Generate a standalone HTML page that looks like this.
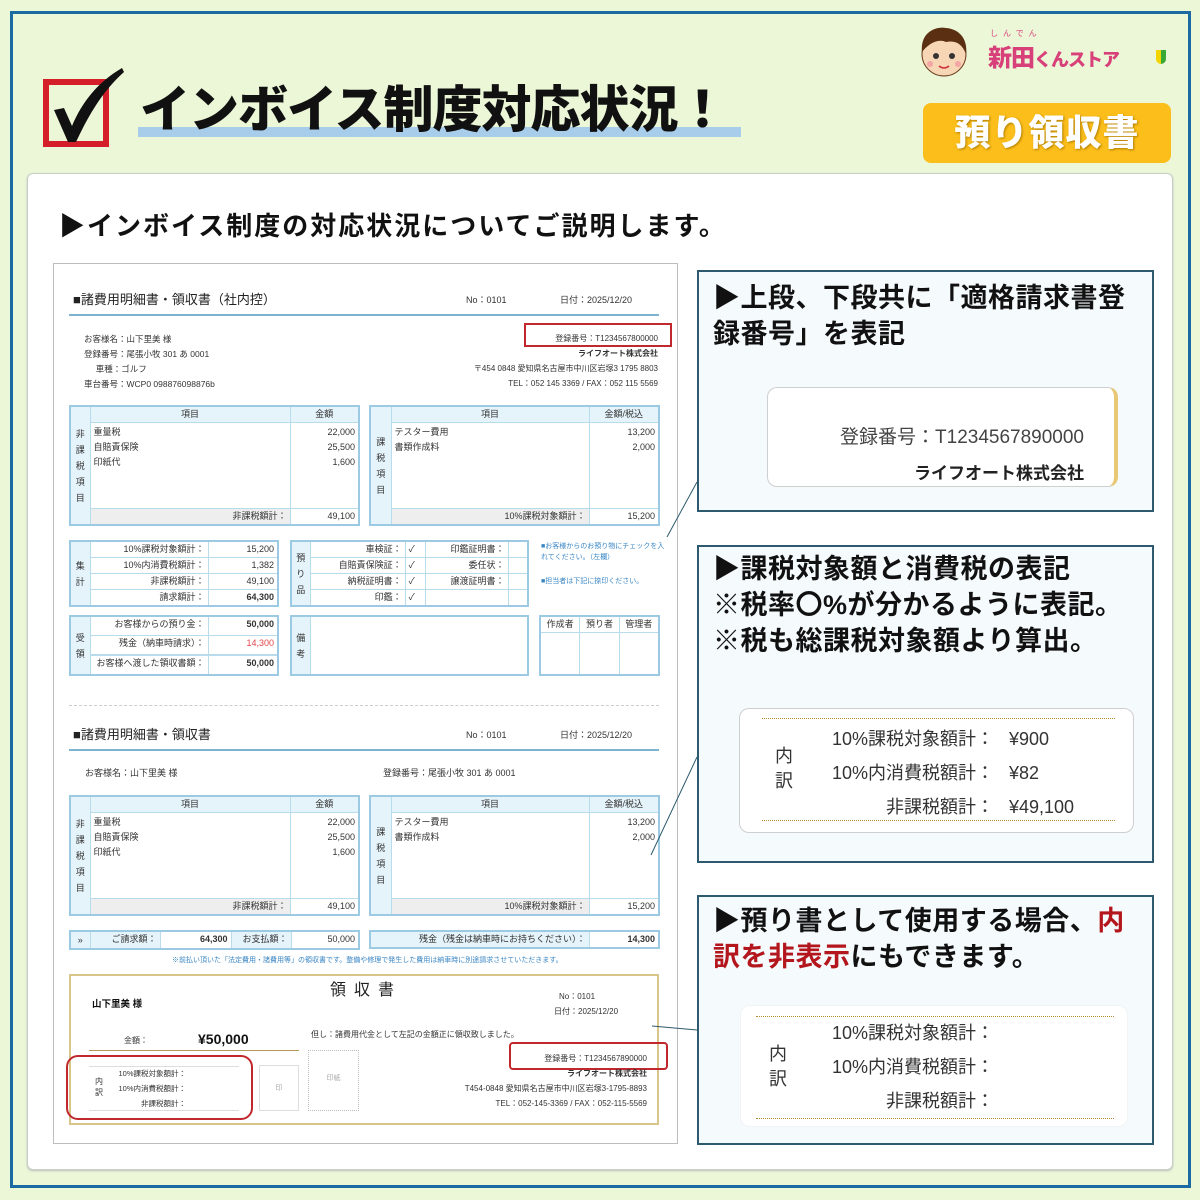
<!DOCTYPE html>
<html><head><meta charset="utf-8">
<style>
*{margin:0;padding:0;box-sizing:border-box}
body{width:1200px;height:1200px;background:#ecf7d8;position:relative;overflow:hidden;font-family:"Liberation Sans","Noto Sans CJK JP",sans-serif;color:#222}
.a{position:absolute}
.frame{left:10px;top:11px;width:1181px;height:1177px;border:3px solid #1b6aa2}
.card{left:27px;top:173px;width:1146px;height:997px;background:#fff;border:1px solid #c9cfc4;border-radius:6px;box-shadow:0 1px 2px #bbb}
.doc{left:53px;top:263px;width:625px;height:881px;border:1px solid #bdbdbd;background:#fff;font-size:9px;color:#333}
.d{position:absolute;font-size:9px;line-height:12px;white-space:nowrap;color:#333}
table.t{position:absolute;border-collapse:collapse;border:2px solid #9ccae2;font-size:9px;color:#333}
table.t td{border:1px solid #b9dcec;padding:0 3px;vertical-align:top;line-height:15px}
td.lb{background:#e5f3fa;text-align:center;vertical-align:middle!important;line-height:16px!important;padding:0!important}
td.h{background:#e5f3fa;text-align:center;height:16px}
td.ft{background:#eee;text-align:right}
.r{text-align:right}
.b{font-weight:bold}
.panel{left:697px;width:457px;background:#f5fafc;border:2px solid #2d5a6e}
.pt{position:absolute;left:14px;font-size:27px;font-weight:bold;line-height:36px;color:#111;white-space:nowrap;letter-spacing:0.5px}
.ib{position:absolute;background:#fff;border:1px solid #cfcfcf;border-radius:10px}
.dot{position:absolute;border-top:1px dotted #b58a2a}
.s{position:absolute;font-size:18px;color:#333;white-space:nowrap}
</style></head><body>
<div class="a frame"></div>

<svg class="a" style="left:38px;top:64px" width="90" height="90" viewBox="0 0 90 90">
<rect x="8" y="18" width="60" height="62" fill="none" stroke="#d41f2a" stroke-width="6"/>
<path d="M16 46 L26 44 L34 62 C44 38 60 18 84 4 L86 8 C66 26 52 48 38 78 L30 78 Z" fill="#111"/>
</svg>
<div class="a" style="left:138px;top:127px;width:603px;height:10px;background:#a8cdea"></div>
<div class="a" style="left:140px;top:80px;font-size:50px;font-weight:900;line-height:60px;color:#111;letter-spacing:-1px;white-space:nowrap">インボイス制度対応状況！</div>

<svg class="a" style="left:916px;top:24px" width="56" height="54" viewBox="0 0 56 54">
<ellipse cx="28" cy="30" rx="22" ry="22" fill="#f7d6b5" stroke="#6b3b1a" stroke-width="1"/>
<path d="M6 28 C4 8 20 2 30 4 C44 5 52 16 50 30 C46 20 40 16 30 18 C22 14 12 20 6 28Z" fill="#5a2f12"/>
<circle cx="20" cy="32" r="3" fill="#333"/><circle cx="36" cy="32" r="3" fill="#333"/>
<circle cx="14" cy="40" r="3" fill="#f4a6a6"/><circle cx="42" cy="40" r="3" fill="#f4a6a6"/>
<path d="M23 42 Q28 46 33 42" stroke="#c33" stroke-width="1.5" fill="none"/>
</svg>
<div class="a" style="left:990px;top:28px;font-size:8px;color:#d8407a;letter-spacing:5px">しんでん</div>
<div class="a" style="left:988px;top:38px;font-size:24px;font-weight:900;color:#d8407a;white-space:nowrap;letter-spacing:-1px">新田<span style="font-size:18px">くんストア</span></div>
<div class="a" style="left:1156px;top:50px;width:10px;height:14px;background:linear-gradient(90deg,#f2d400 50%,#39a935 50%);border-radius:0 0 6px 6px"></div>

<div class="a" style="left:923px;top:103px;width:248px;height:60px;background:#fbbe1b;border-radius:8px;color:#fff;font-size:36px;font-weight:900;text-align:center;line-height:60px;text-shadow:1px 1px 2px #b07d00;letter-spacing:1px">預り領収書</div>

<div class="a card"></div>
<div class="a" style="left:59px;top:208px;font-size:26px;font-weight:bold;line-height:36px;color:#111;white-space:nowrap;letter-spacing:2px">▶インボイス制度の対応状況についてご説明します。</div>

<div class="a doc"></div>
<div class="d" style="left:73px;top:292px;font-size:13px;line-height:16px;color:#222">■諸費用明細書・領収書（社内控）</div>
<div class="d" style="left:466px;top:294px">No：0101</div>
<div class="d" style="left:560px;top:294px">日付：2025/12/20</div>
<div class="a" style="left:69px;top:314px;width:590px;height:2px;background:#7db3d0"></div>
<div class="a" style="left:524px;top:323px;width:148px;height:24px;border:2px solid #c0282d"></div>
<div class="d" style="left:84px;top:332px;font-size:8.5px;line-height:15px">お客様名：山下里美 様<br>登録番号：尾張小牧 301 あ 0001<br>&nbsp;&nbsp;&nbsp;&nbsp;&nbsp;車種：ゴルフ<br>車台番号：WCP0 098876098876b</div>
<div class="d r" style="right:542px;top:331px;font-size:8px;line-height:15px">登録番号：T1234567800000<br><b>ライフオート株式会社</b><br>〒454 0848 愛知県名古屋市中川区岩塚3 1795 8803<br>TEL：052 145 3369 / FAX：052 115 5569</div>

<table class="t" style="left:69px;top:405px;width:291px;height:121px">
<tr style="height:16px"><td rowspan="3" class="lb" style="width:20px">非<br>課<br>税<br>項<br>目</td><td class="h">項目</td><td class="h" style="width:69px">金額</td></tr>
<tr><td style="padding-top:2px">重量税<br>自賠責保険<br>印紙代</td><td class="r" style="padding-top:2px">22,000<br>25,500<br>1,600</td></tr>
<tr style="height:16px"><td class="ft">非課税額計：</td><td class="r">49,100</td></tr>
</table>
<table class="t" style="left:369px;top:405px;width:291px;height:121px">
<tr style="height:16px"><td rowspan="3" class="lb" style="width:21px">課<br>税<br>項<br>目</td><td class="h">項目</td><td class="h" style="width:70px">金額/税込</td></tr>
<tr><td style="padding-top:2px">テスター費用<br>書類作成料</td><td class="r" style="padding-top:2px">13,200<br>2,000</td></tr>
<tr style="height:16px"><td class="ft">10%課税対象額計：</td><td class="r">15,200</td></tr>
</table>

<table class="t" style="left:69px;top:540px;width:210px;height:61px">
<tr><td rowspan="4" class="lb" style="width:20px">集<br>計</td><td class="r">10%課税対象額計：</td><td class="r" style="width:70px">15,200</td></tr>
<tr><td class="r">10%内消費税額計：</td><td class="r">1,382</td></tr>
<tr><td class="r">非課税額計：</td><td class="r">49,100</td></tr>
<tr><td class="r">請求額計：</td><td class="r b">64,300</td></tr>
</table>
<table class="t" style="left:290px;top:540px;width:239px;height:61px">
<tr><td rowspan="4" class="lb" style="width:19px">預<br>り<br>品</td><td class="r">車検証：</td><td style="width:20px">✓</td><td class="r">印鑑証明書：</td><td style="width:20px"></td></tr>
<tr><td class="r">自賠責保険証：</td><td>✓</td><td class="r">委任状：</td><td></td></tr>
<tr><td class="r">納税証明書：</td><td>✓</td><td class="r">譲渡証明書：</td><td></td></tr>
<tr><td class="r">印鑑：</td><td>✓</td><td></td><td></td></tr>
</table>
<div class="d" style="left:541px;top:541px;font-size:7px;color:#3a86c4;line-height:11px">■お客様からのお預り物にチェックを入<br>れてください。（左欄）</div>
<div class="d" style="left:541px;top:576px;font-size:7px;color:#3a86c4">■担当者は下記に捺印ください。</div>

<table class="t" style="left:69px;top:615px;width:210px;height:61px">
<tr><td rowspan="4" class="lb" style="width:20px">受<br>領</td><td class="r">お客様からの預り金：</td><td class="r b" style="width:70px">50,000</td></tr>
<tr><td class="r">残金（納車時請求）：</td><td class="r" style="color:#e0464b">14,300</td></tr>
<tr><td></td><td></td></tr>
<tr><td class="r">お客様へ渡した領収書額：</td><td class="r b">50,000</td></tr>
</table>
<table class="t" style="left:290px;top:615px;width:239px;height:61px">
<tr><td class="lb" style="width:19px">備<br>考</td><td></td></tr>
</table>
<table class="t" style="left:539px;top:615px;width:121px;height:61px">
<tr style="height:15px"><td style="text-align:center">作成者</td><td style="text-align:center">預り者</td><td style="text-align:center">管理者</td></tr>
<tr><td></td><td></td><td></td></tr>
</table>

<div class="a" style="left:69px;top:705px;width:590px;border-top:1px dashed #ccc"></div>
<div class="d" style="left:73px;top:727px;font-size:13px;line-height:16px;color:#222">■諸費用明細書・領収書</div>
<div class="d" style="left:466px;top:729px">No：0101</div>
<div class="d" style="left:560px;top:729px">日付：2025/12/20</div>
<div class="a" style="left:69px;top:749px;width:590px;height:2px;background:#7db3d0"></div>
<div class="d" style="left:85px;top:767px">お客様名：山下里美 様</div>
<div class="d" style="left:383px;top:767px">登録番号：尾張小牧 301 あ 0001</div>

<table class="t" style="left:69px;top:795px;width:291px;height:121px">
<tr style="height:16px"><td rowspan="3" class="lb" style="width:20px">非<br>課<br>税<br>項<br>目</td><td class="h">項目</td><td class="h" style="width:69px">金額</td></tr>
<tr><td style="padding-top:2px">重量税<br>自賠責保険<br>印紙代</td><td class="r" style="padding-top:2px">22,000<br>25,500<br>1,600</td></tr>
<tr style="height:16px"><td class="ft">非課税額計：</td><td class="r">49,100</td></tr>
</table>
<table class="t" style="left:369px;top:795px;width:291px;height:121px">
<tr style="height:16px"><td rowspan="3" class="lb" style="width:21px">課<br>税<br>項<br>目</td><td class="h">項目</td><td class="h" style="width:70px">金額/税込</td></tr>
<tr><td style="padding-top:2px">テスター費用<br>書類作成料</td><td class="r" style="padding-top:2px">13,200<br>2,000</td></tr>
<tr style="height:16px"><td class="ft">10%課税対象額計：</td><td class="r">15,200</td></tr>
</table>
<table class="t" style="left:69px;top:930px;width:291px;height:17px">
<tr><td class="lb" style="width:20px">»</td><td class="r" style="width:70px;background:#e5f3fa">ご請求額：</td><td class="r b" style="width:71px">64,300</td><td class="r" style="width:60px;background:#e5f3fa">お支払額：</td><td class="r">50,000</td></tr>
</table>
<table class="t" style="left:369px;top:930px;width:291px;height:17px">
<tr><td class="r" style="background:#e5f3fa">残金（残金は納車時にお持ちください）：</td><td class="r b" style="width:70px">14,300</td></tr>
</table>
<div class="d" style="left:172px;top:955px;font-size:7px;color:#3a86c4">※前払い頂いた「法定費用・諸費用等」の領収書です。整備や修理で発生した費用は納車時に別途請求させていただきます。</div>

<div class="a" style="left:69px;top:974px;width:590px;height:151px;border:2px solid #d9c58a"></div>
<div class="d" style="left:330px;top:982px;font-size:16px;line-height:18px;letter-spacing:8px;color:#222">領収書</div>
<div class="d b" style="left:92px;top:999px;font-size:9.5px;color:#111">山下里美 様</div>
<div class="d" style="left:559px;top:991px;font-size:8px">No：0101</div>
<div class="d" style="left:554px;top:1006px;font-size:8px">日付：2025/12/20</div>
<div class="d" style="left:124px;top:1035px;font-size:8px">金額：</div>
<div class="d b" style="left:198px;top:1031px;font-size:14px;line-height:16px;color:#111">¥50,000</div>
<div class="a" style="left:89px;top:1050px;width:210px;border-top:1px solid #b59a55"></div>
<div class="d" style="left:311px;top:1029px;font-size:8px">但し：諸費用代金として左記の金額正に領収致しました。</div>
<div class="a" style="left:509px;top:1042px;width:159px;height:28px;border:2px solid #c0282d;border-radius:4px"></div>
<div class="d r" style="right:553px;top:1051px;font-size:8px;line-height:15px">登録番号：T1234567890000<br><b>ライフオート株式会社</b><br>T454-0848 愛知県名古屋市中川区岩塚3-1795-8893<br>TEL：052-145-3369 / FAX：052-115-5569</div>
<div class="a" style="left:89px;top:1066px;width:150px;border-top:1px solid #ddd"></div>
<div class="a" style="left:89px;top:1110px;width:150px;border-top:1px solid #ddd"></div>
<div class="d" style="left:95px;top:1076px;font-size:8px;line-height:11px">内<br>訳</div>
<div class="d r" style="right:1014px;top:1066px;font-size:7.5px;line-height:15px">10%課税対象額計：<br>10%内消費税額計：<br>非課税額計：</div>
<div class="a" style="left:259px;top:1065px;width:40px;height:46px;border:1px solid #ddd;font-size:7px;color:#aaa;text-align:center;line-height:46px">印</div>
<div class="a" style="left:308px;top:1050px;width:51px;height:61px;border:1px dotted #bbb;font-size:7px;color:#aaa;text-align:center;line-height:56px">印紙</div>
<div class="a" style="left:66px;top:1055px;width:187px;height:65px;border:2px solid #c0282d;border-radius:12px"></div>

<svg class="a" style="left:0;top:0" width="1200" height="1200">
<path d="M697 482 L667 537" stroke="#2d5a6e" stroke-width="1" fill="none"/>
<path d="M697 757 L651 855" stroke="#2d5a6e" stroke-width="1" fill="none"/>
<path d="M652 1026 L697 1030" stroke="#2d5a6e" stroke-width="1" fill="none"/>
</svg>

<div class="a panel" style="top:270px;height:242px">
<div class="pt" style="top:8px">▶上段、下段共に「適格請求書登<br>録番号」を表記</div>
<div class="ib" style="left:68px;top:115px;width:351px;height:100px;border-right:4px solid #e8c874">
<div class="a" style="right:30px;top:34px;font-size:19px;color:#444;white-space:nowrap">登録番号：T1234567890000</div>
<div class="a" style="right:30px;top:71px;font-size:17px;font-weight:bold;color:#222;white-space:nowrap">ライフオート株式会社</div>
</div>
</div>

<div class="a panel" style="top:545px;height:318px">
<div class="pt" style="top:4px">▶課税対象額と消費税の表記<br>※税率〇%が分かるように表記。<br>※税も総課税対象額より算出。</div>
<div class="ib" style="left:40px;top:161px;width:395px;height:125px"></div>
</div>
<div class="dot" style="left:762px;top:718px;width:353px"></div>
<div class="dot" style="left:762px;top:820px;width:353px"></div>
<div class="s" style="left:775px;top:744px;line-height:25px">内<br>訳</div>
<div class="s r" style="right:206px;top:722px;line-height:34px">10%課税対象額計：<br>10%内消費税額計：<br>非課税額計：</div>
<div class="s" style="left:1009px;top:722px;line-height:34px">¥900<br>¥82<br>¥49,100</div>

<div class="a panel" style="top:895px;height:250px">
<div class="pt" style="top:6px">▶預り書として使用する場合、<span style="color:#b3161c">内</span><br><span style="color:#b3161c">訳を非表示</span>にもできます。</div>
<div class="ib" style="left:41px;top:108px;width:388px;height:122px;border-color:#f1f4f5"></div>
</div>
<div class="dot" style="left:756px;top:1016px;width:358px"></div>
<div class="dot" style="left:756px;top:1118px;width:358px"></div>
<div class="s" style="left:769px;top:1042px;line-height:25px">内<br>訳</div>
<div class="s r" style="right:206px;top:1016px;line-height:34px">10%課税対象額計：<br>10%内消費税額計：<br>非課税額計：</div>
</body></html>
